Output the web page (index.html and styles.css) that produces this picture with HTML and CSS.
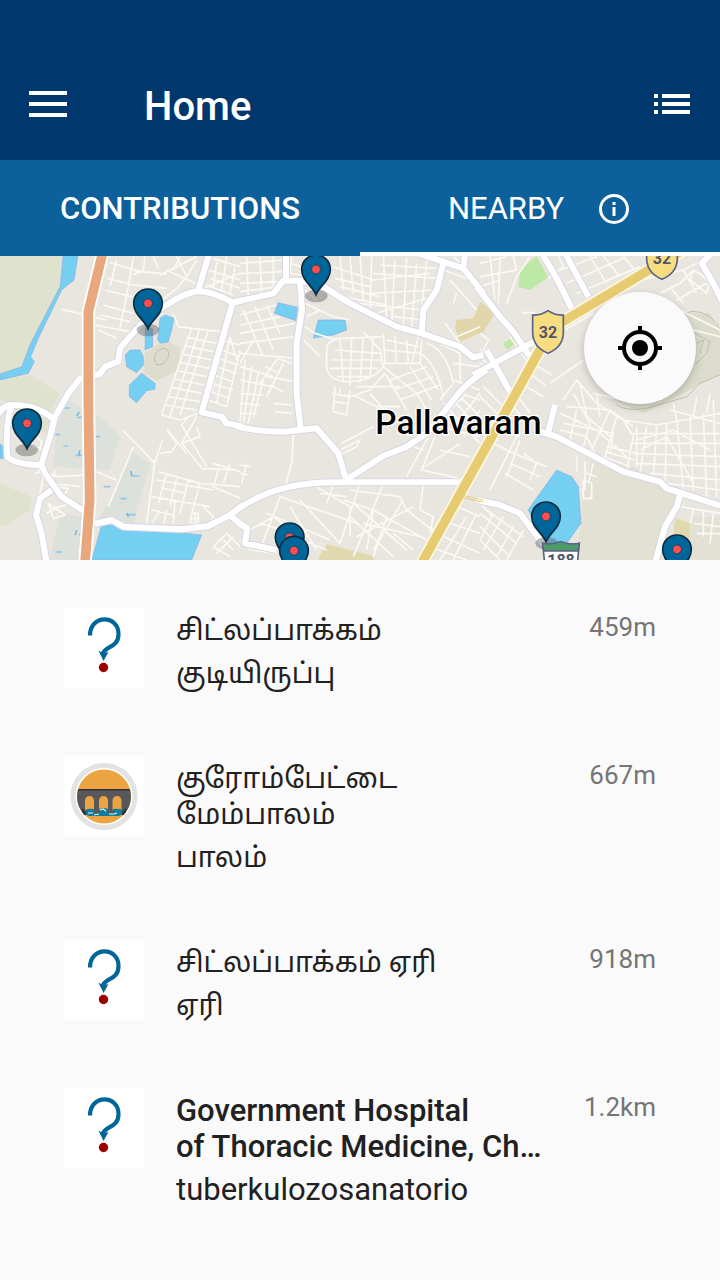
FILE: index.html
```html
<!DOCTYPE html>
<html lang="ta">
<head>
<meta charset="utf-8">
<meta name="viewport" content="width=device-width, initial-scale=1">
<title>Home</title>
<link rel="stylesheet" href="styles.css">
</head>
<body>
<header class="app-bar">
  <button class="icon-button" type="button" aria-label="Menu">
    <svg width="38" height="26" viewBox="0 0 38 26"><path d="M0 0h38v4H0zM0 11h38v4H0zM0 22h38v4H0z" fill="#fff"/></svg>
  </button>
  <h1 class="title">Home</h1>
  <button class="icon-button" type="button" aria-label="List">
    <svg width="36" height="20" viewBox="0 0 36 20"><path d="M0 0h4v4H0zM8 0h28v4H8zM0 8h4v4H0zM8 8h28v4H8zM0 16h4v4H0zM8 16h28v4H8z" fill="#fff"/></svg>
  </button>
</header>
<nav class="tabs">
  <button class="tab tab-strong" type="button">CONTRIBUTIONS</button>
  <button class="tab tab-active" type="button">NEARBY
    <svg width="30" height="30" viewBox="0 0 30 30"><circle cx="15" cy="15" r="13.5" fill="none" stroke="#fff" stroke-width="3"/><path d="M13.5 13h3v9h-3zM13.5 8h3v3h-3z" fill="#fff"/></svg>
  </button>
</nav>
<main>
<section class="map" aria-label="Map">
  <svg class="map-canvas" viewBox="0 18 2160 912" preserveAspectRatio="xMidYMid slice">
    <defs>
      <g id="pin">
        <path d="M0 76C-10 50-43 34-43 0A43 43 0 0 1 43 0C43 34 10 50 0 76z" fill="#006699" stroke="#0a2c40" stroke-width="5"/>
        <circle r="13" fill="#ff4f52" stroke="#123047" stroke-width="2"/>
      </g>
      <ellipse id="shade" rx="34" ry="19" fill="#555" opacity=".4"/>
      <g id="roads-left">
        <path d="M628 10L594 123M450 195L500 165Q550 130 594 123Q640 125 698 158L730 150M450 195L385 265L360 295L355 335L315 350L300 372L240 385L205 430L165 500L150 560L125 640M698 158L605 487L665 500L680 520L730 530M-10 500Q10 462 40 465Q110 465 163 508M35 468Q15 520 22 620Q40 642 125 646L135 670L185 740L255 785M155 720L120 745L108 795L125 850L140 940M285 822L335 810L370 830L545 838L625 828L690 795L730 765M690 795L730 830"/>
      </g>
      <g id="roads-mid">
        <path d="M-10 155L100 130L130 92L180 92L186 180L170 280L170 430L182 535M138 10L138 90M-10 530Q60 545 130 545L230 535L295 610L317 685M180 92L250 110L330 160L470 230L545 250L660 290L700 322L730 315M540 12L670 55L730 130M675 10L670 55M610 40L590 120L550 180L545 250M-10 780Q60 730 150 710Q220 695 317 697L660 697M317 690L430 618L500 590L560 550L640 450Q675 400 740 360M-10 815L22 835L15 880L110 900"/>
      </g>
      <g id="roads-right">
        <path d="M-10 110L60 200L100 245L160 335M180 0L230 85L275 175M250 0L325 140M-20 375L60 330L200 255M20 300L90 425M200 555L205 545L225 465M180 545L230 560L430 665L540 695L560 715L730 770M-10 750L60 765L120 790L150 830L190 885M600 735L590 770L555 830L525 940M690 15L665 40L700 100L725 150"/>
      </g>
    </defs>
    <rect y="0" width="2160" height="940" fill="#e9e6e0"/>

    <!-- land cover -->
    <path d="M0 0H190L175 120L100 270L60 350L0 380zM0 390L90 375L180 430L150 490L0 450zM0 700L95 740L90 780L10 830L0 825zM45 470L150 510L140 545L90 545L60 530z" fill="#dfe2cd"/>
    <path d="M490 270L540 290L535 360L470 392L430 370L435 310z" fill="#dedccd"/>
    <path d="M200 450L300 500L360 560L330 660L160 650L170 530zM390 600L450 640L400 820L290 810L340 740zM180 790L250 800L240 930H150z" fill="#dde1dc"/>
    <g transform="translate(1440)">
      <path d="M340 610Q520 660 600 740L530 930H290L310 730z" fill="#e3e1d3"/>
      <path d="M600 190L690 190L720 250V370L610 430L490 490L400 450z" fill="#dbdccb"/>
      <path d="M585 805L632 820L625 900L580 860z" fill="#e0d9ae"/>
      <path d="M640 800H720V930H620z" fill="#e2e1d3"/>
      <path d="M120 60L170 18L205 82L150 120L115 110zM68 280L100 262L108 280L82 300z" fill="#bde8a6"/>
      <path d="M0 155L45 190L10 245L-60 275L-75 235L-70 210L-20 205z" fill="#e0d6a9"/>
    </g>
    <path d="M960 915L980 882L1120 918V940H950z" fill="#e0d9ae"/>

    <!-- water -->
    <g fill="#75cff0" stroke="#8daee2" stroke-width="2">
      <path d="M190 10H235L222 90L185 120L115 265L92 320L103 335L85 370L0 390V372L65 350L92 280L180 110z"/>
      <path d="M480 205L495 195L522 205L515 240L505 275L482 280L473 270zM436 235L457 235L458 290L435 300zM376 315L390 300L420 300L430 320V345L410 368L380 350zM388 405L425 370L465 400L465 418L440 422L410 458L388 440z"/>
      <path d="M305 825H340L360 835L540 848L605 855L575 930H275zM0 582L12 590V625H0z"/>
      <path d="M834 158L892 172L888 212L823 190zM955 210L1035 210L1040 240L1000 255L940 264z"/>
      <path d="M1670 660L1715 680L1735 710L1743 820L1700 880L1640 880L1584 780z"/>
    </g>
    <path d="M192 474h18m22 28h14m-80 52h14m10 34h14m45 28h-22m60-56h14m92 118h26m-108 32h20m30 36h20m-2 48h28m-170 60h20m-90 52h20" stroke="#91c7e5" stroke-width="5" fill="none"/>
    <path d="M236 615l4-14m-10-104l8-10m158 190l-4-14m-166 192l4-14m155-40l-4-12" stroke="#75b9e5" stroke-width="5"/>

    <!-- contour lines -->
    <g fill="none" stroke="#bfc1aa" stroke-width="3">
      <path d="M463 330Q462 305 488 295Q512 298 505 320Q490 348 470 344z"/>
      <path d="M2050 190Q2110 170 2150 220L2170 260M2085 250L2130 275L2120 310L2085 345M1850 465Q1880 485 1940 475L2060 440L2100 400L2170 370M2090 280L2110 270L2100 310"/>
    </g>

    <!-- side streets -->
    <g class="streets">
      <path d="M330 38L420 65L500 72M322 85L400 105L500 115M315 120L395 140M400 20L385 110L360 235M435 20L430 60L400 75M460 20L475 55M530 20L560 80L530 115L480 155M500 60L585 100M185 178L320 210M310 165L400 190M300 195L390 215M285 225L390 245M295 240L350 265M480 75L590 20M350 30L330 110M560 80L590 30M540 20L520 60"/>
      <path d="M625 60L720 90M630 85L720 115M618 105L700 135M640 25L720 50M650 35L640 110M680 20L665 120M705 50L690 130M610 115L720 70"/>
      <path d="M520 190L535 230L660 245M575 235L485 495M600 235L510 500M625 240L540 495M560 262L650 280M552 287L640 305M545 312L635 330M537 337L630 355M530 362L620 380M522 387L615 405M515 412L605 430M505 440L600 455M495 465L590 480M485 495L540 510L595 490M590 500L545 580L610 660M565 500L545 525L620 650M500 538L560 610M545 580L600 560L590 530M500 540L530 580L515 605L480 610"/>
      <path d="M660 270L720 285M650 295L720 320M640 320L715 345M632 345L710 370M625 370L700 395M620 395L700 420M615 420L690 445M610 445L680 470M690 260L650 460M720 300L680 470M675 255L635 430M690 260L710 330"/>
      <path d="M368 540L465 640M400 590L325 770M465 630L440 820M488 570L465 635M290 665L350 690M165 660L155 700L240 710M130 670L180 680L260 675M160 710L205 715L185 750M145 760L195 795L160 805zM155 775L200 765M140 790L180 770M110 650L130 680L108 790M110 560L125 575L120 600M95 590L125 595M105 670L140 660"/>
      <path d="M475 665L600 700L720 710M470 690L640 720M455 740L630 770M500 670L475 760M530 685L510 770M565 690L540 790M600 700L575 790M490 715L560 730M480 780L455 820M455 780L520 795M500 780L490 830M525 750L520 820M575 790h20v30h-25zM570 805h28M585 788v30M610 655L700 660M640 640L720 665M655 660L640 710L720 745M690 640L670 700M610 770L640 800L630 825"/>
      <path d="M640 890L680 850L720 890M650 910L700 860M670 870L700 900M640 890L690 920"/>
    </g>
    <g class="streets" transform="translate(720)">
      <path d="M0 40L135 30M0 70L130 65M0 100L120 95M0 125L100 112M20 20L25 135M60 20L65 130M100 20L100 115M150 40L185 50M155 20L150 70L185 75M0 195L110 165M0 225L120 200M0 250L165 220M0 280L165 260M10 180L70 320M45 170L100 300M80 165L120 250M0 310L170 325M40 270L0 340M0 350L100 380M110 330L60 400M130 340L80 440M0 390L95 410M15 330L0 520M35 350L10 520M55 370L25 520M70 390L40 500M0 430L70 435M0 460L60 465M0 490L50 490M80 380L165 395M90 405L130 425M100 460L155 465M105 485L155 490M75 350L120 370M155 340L110 325"/>
      <path d="M195 120L230 150M195 160L280 200L330 210M200 200L240 180M195 230L225 250L290 270M190 270L240 320M280 50L400 90L570 70M300 20L310 120M330 20L340 130M360 20L370 150M395 20L390 185M430 20L440 210M465 35L455 220M500 25L490 230M530 40L515 235M560 30L540 230M285 85L390 110M300 110L420 140M310 140L440 165M350 160L550 180M390 195L560 145M400 70L590 85M420 45L590 55M390 130L580 120M460 200L550 210"/>
      <path d="M260 290Q270 265 310 265L430 260M260 290L260 355Q270 395 330 395Q400 390 430 350L420 300L370 245M285 300L425 310M275 330L425 330M270 355L415 355M290 380L390 380M300 265L310 395M335 260L330 405M370 260L360 400M400 260L390 385M430 250L435 340L540 340L545 270M440 270L535 290M435 300L540 310M465 260L470 340M500 270L505 340M535 260L515 340M275 430L330 440L390 420L435 370L500 480M285 410L280 485L320 495L330 420M280 455L320 460M300 415L300 430M350 410L480 410M340 435L410 470L480 470M390 430L450 500M430 350L530 430L560 480M450 390L560 350M460 420L580 380M480 450L600 405M560 280Q620 300 640 400L600 450M540 310Q590 340 610 440M580 270L660 310L660 400M540 340L595 420M510 350L575 450"/>
      <path d="M610 60L720 100M630 90L710 180M650 130L640 160M615 220L660 280M650 260L720 230M680 60L640 20M640 340L720 350M640 390L720 420M660 430L720 450M610 460L720 580M630 440L720 540M650 430L720 500M610 500L680 430M640 530L720 430M670 560L720 480M300 600L360 570L350 590L290 620M305 580L400 530M160 555L155 640L135 710M0 645L30 650M0 670L25 675M20 640L5 700M585 560L545 660L680 690M565 560L500 680M600 600L690 620M555 650L660 580M520 590L550 600M600 530L720 560"/>
      <path d="M120 740L350 820M120 740L60 900M150 770L230 900M180 750L300 880M80 790L270 870M60 820L200 860M110 840L260 900M30 840L100 800L140 830M220 705L330 770L330 860M240 730L320 740M280 705L260 760M330 720L480 740L500 780L590 850M310 750L400 780L560 870M360 700L300 880M430 700L340 920M400 780L380 900M440 800L400 920M340 760L500 900M330 800L460 920M350 860L520 770M370 820L540 860M400 900L490 750M460 850L520 900M550 700L540 780L580 800L570 850M630 760L720 800M600 810L720 850M590 850L720 910M640 740L580 900M680 800L600 930M710 790L640 930M570 890L680 930M0 870L30 900L110 910"/>
    </g>
    <g class="streets" transform="translate(1440)">
      <path d="M0 40L80 20M0 80L110 60L100 18M30 20L45 150M60 20L55 160M0 110L60 90M80 160L110 80L150 20M205 85L250 50L235 18M125 188H165M240 60L350 20M260 100L430 25M290 130L480 50M330 20L380 100M370 18L420 80M430 20L465 60M270 190L400 110L610 60L690 20M255 240L340 190M245 210L330 165M540 130L600 100L640 60M590 150L680 100M570 110L610 160M640 60L690 90L680 130L630 90zM660 70L690 100M610 60L650 130M600 180L720 240M640 240L720 260"/>
      <path d="M0 320L30 350L10 370M0 300L50 330M0 340L20 350M0 250L25 270L10 300M90 260L140 330M150 370L200 410M160 340L215 375M140 410L190 440M115 440L150 490M100 470L140 520M50 540L120 560M40 580L100 610M0 440L60 500M10 410L80 480M30 720L120 540M90 640L180 680M75 670L160 720M130 610L170 640L150 690M100 610L200 650M120 570L80 680M290 620V665M310 690L335 700V745H310zM340 640L325 700M350 680L310 665M315 635L315 720"/>
      <path d="M250 450L290 390L350 460L430 510L530 525L720 490M260 470L390 480L460 530M240 490L350 540L440 620M280 430L330 520L310 590M300 400L320 500L390 560M350 430L360 500M340 430L430 450M250 520L400 550L390 610M240 540L320 560L350 620M290 480L270 570M390 480L330 610M410 500L370 640M430 510L460 560L440 660M380 590L470 610M375 605L465 630M370 620L450 650M470 530V650M500 530L480 670M530 525L520 690M560 520L555 710M590 510L610 720M630 500L640 720M670 490L680 740M700 450L710 740M450 550L720 551M450 580L720 580M460 610L720 620M470 640L720 650M510 670L720 690M560 700L720 720M570 480L720 520M580 460L590 510M650 440L640 500M690 430L680 490M470 570L580 540L690 600M480 600L560 560L640 700"/>
      <path d="M0 790L110 880M20 780L130 860M0 830L90 920M40 790L0 870M70 800L10 900M100 830L50 920M130 840L80 930M0 870L60 930M0 760L40 800M600 770L720 790M640 780L630 820M670 785V860M700 790L690 880M640 820L720 830M650 850L720 851M210 400L310 330" />
    </g>

    <!-- main roads: outline, then fill -->
    <g class="road-edge"><use href="#roads-left"/><use href="#roads-mid" x="720"/><use href="#roads-right" x="1440"/></g>
    <g class="road-fill"><use href="#roads-left"/><use href="#roads-mid" x="720"/><use href="#roads-right" x="1440"/></g>

    <path class="trunk-edge" d="M310 0L265 185V450L269 750L255 940"/>
    <path class="trunk" d="M310 0L265 185V450L269 750L255 940"/>
    <path class="highway-edge" d="M1265 940L1625 290L1680 220L1980 40L2050 0"/>
    <path class="highway" d="M1265 940L1625 290Q1640 245 1680 220L1980 40L2050 0"/>
    <path d="M1385 742L1450 757M1388 736L1452 751" stroke="#e6cf76" stroke-width="3"/>

    <text class="place" x="1126" y="552">Pallavaram</text>

    <!-- route shields -->
    <g id="shield">
      <path d="M1598 195Q1622 197 1644 182Q1666 197 1690 195V250Q1688 292 1644 310Q1600 292 1598 250z" fill="#f6dd80" stroke="#5c6286" stroke-width="5"/>
      <text class="route" x="1644" y="263">32</text>
    </g>
    <use href="#shield" x="342" y="-222"/>

    <use href="#shade" x="444" y="240"/><use href="#pin" x="444" y="160"/>
    <use href="#shade" x="80" y="600"/><use href="#pin" x="81" y="520"/>
    <use href="#shade" x="949" y="138"/><use href="#pin" x="948" y="58"/>
    <use href="#pin" x="869" y="862"/><use href="#pin" x="882" y="902"/>
    <use href="#shade" x="1640" y="880"/><use href="#pin" x="1638" y="799"/>
    <use href="#pin" x="2031" y="898"/>

    <path d="M1628 880Q1655 886 1682 875Q1710 886 1738 880L1732 940H1634z" fill="#fff" stroke="#5c6286" stroke-width="5"/>
    <path d="M1628 880Q1655 886 1682 875Q1710 886 1738 880L1734 903H1632z" fill="#4f9a6b" stroke="#5c6286" stroke-width="4"/>
    <text class="route" x="1683" y="948">188</text>
  </svg>
  <button class="locate" type="button" aria-label="My location">
    <svg width="44" height="44" viewBox="0 0 44 44"><circle cx="22" cy="22" r="8"/><circle cx="22" cy="22" r="16" fill="none" stroke="#000" stroke-width="4"/><path d="M20 0h4v6h-4zM20 38h4v6h-4zM0 20h6v4H0zM38 20h6v4h-6z"/></svg>
  </button>
</section>

<ul class="places">
  <li class="item">
    <svg class="thumb" viewBox="0 0 80 80">
      <g id="question"><path d="M26 27.500C26 6 54.500 6.500 54.500 26C54.500 41 40 37 38.500 47" fill="none" stroke="#069" stroke-width="4.200"/><path d="M34.500 42.500Q39 46 44.500 44L39.500 53z" fill="#069"/><circle cx="39.500" cy="59.500" r="4.700" fill="#900"/></g>
    </svg>
    <div class="text"><h2 class="name">சிட்லப்பாக்கம்</h2><p class="kind">குடியிருப்பு</p></div>
    <span class="distance">459m</span>
  </li>
  <li class="item">
    <svg class="thumb" viewBox="0 0 80 80">
      <clipPath id="disc"><circle cx="40" cy="40.500" r="27"/></clipPath>
      <circle cx="40" cy="40.500" r="31" fill="#fff" stroke="#e3e3e3" stroke-width="5"/>
      <g clip-path="url(#disc)">
        <path d="M10 10h60v60H10z" fill="#eba441"/>
        <path d="M10 33h60v22l-8 4H18l-8-4z" fill="#58585a"/><path d="M10 33h60v1.500H10z" fill="#333"/>
        <path d="M21 54V44.500a4.500 4.500 0 0 1 9 0V54zM35 54V44.500a4.500 4.500 0 0 1 9 0V54zM48.500 54V44.500a4.500 4.500 0 0 1 9 0V54z" fill="#eba441"/>
        <path d="M21 54q4-2 9-1v4h5v-4q5-2 9 0v4h5v-4q6-1 10 1v4l-4 2H25l-4-2z" fill="#0f7d9e"/>
        <path d="M24 57h5M36 54l3-1 3 2M45 58h5l3-1M30 59l5-1" stroke="#e2f4f8" stroke-width="1.200" fill="none"/>
        <path d="M18 52l4 4v3h-4zM62 52l-4 4v3h4z" fill="#333"/>
      </g>
    </svg>
    <div class="text"><h2 class="name">குரோம்பேட்டை<br>மேம்பாலம்</h2><p class="kind">பாலம்</p></div>
    <span class="distance">667m</span>
  </li>
  <li class="item">
    <svg class="thumb" viewBox="0 0 80 80"><use href="#question"/></svg>
    <div class="text"><h2 class="name">சிட்லப்பாக்கம் ஏரி</h2><p class="kind">ஏரி</p></div>
    <span class="distance">918m</span>
  </li>
  <li class="item">
    <svg class="thumb" viewBox="0 0 80 80"><use href="#question"/></svg>
    <div class="text"><h2 class="name name-latin">Government Hospital<br>of Thoracic Medicine, Ch…</h2><p class="kind kind-latin">tuberkulozosanatorio</p></div>
    <span class="distance">1.2km</span>
  </li>
</ul>
</main>
</body>
</html>
```
FILE: styles.css
```css
* { box-sizing: border-box; }
body {
  margin: 0;
  min-height: 100vh;
  background: #fafafa;
  color: #212121;
  font-family: Roboto, "Noto Sans", "Noto Sans Tamil", sans-serif;
}
button { border: 0; padding: 0; background: none; color: inherit; font: inherit; }
svg { display: block; }

.app-bar {
  display: flex;
  align-items: center;
  padding: 48px 30px 0 29px;
  height: 160px;
  background: #00376c;
  color: #fff;
}
.icon-button { display: flex; }
.title {
  flex: 1;
  margin: 0 0 0 77px;
  padding-top: 6px;
  font-size: 40px;
  line-height: 48px;
  font-weight: 500;
}

.tabs { display: grid; grid-template-columns: 1fr 1fr; background: #0c609c; color: #fff; }
.tab {
  display: flex;
  align-items: center;
  justify-content: center;
  gap: 35px;
  height: 96px;
  padding-top: 5px;
  border-bottom: 4px solid transparent;
  font-size: 31px;
}
.tab-strong { font-weight: 500; }
.tab-active { padding-right: 3px; border-bottom-color: #fff; }

.map { position: relative; height: 304px; overflow: hidden; }
.map-canvas { width: 100%; height: 100%; }
.streets, .road-edge, .road-fill, .trunk, .trunk-edge, .highway, .highway-edge { fill: none; stroke-linejoin: round; }
.streets { stroke: #fbf9f5; stroke-width: 5px; }
.road-edge { stroke: #d6d6e6; stroke-width: 24px; }
.road-fill { stroke: #fff; stroke-width: 18px; }
.trunk-edge { stroke: #fff; stroke-width: 40px; }
.trunk { stroke: #e8a77c; stroke-width: 29px; }
.highway-edge { stroke: #fdf8e2; stroke-width: 38px; }
.highway { stroke: #e6cb70; stroke-width: 28px; }
.place {
  font-family: Roboto, sans-serif;
  font-size: 100px;
  font-weight: 500;
  fill: #000;
  stroke: #fff;
  stroke-width: 8px;
  paint-order: stroke;
}
.route { font-family: Roboto, sans-serif; font-size: 48px; font-weight: 700; fill: #54556b; text-anchor: middle; }
.locate {
  position: absolute;
  top: 36px;
  right: 24px;
  display: grid;
  place-items: center;
  width: 112px;
  height: 112px;
  border-radius: 50%;
  background: #fafafa;
  box-shadow: 0 3px 8px rgba(0, 0, 0, .2);
}

.places { margin: 0; padding: 16px 0; list-style: none; }
.item { display: flex; align-items: flex-start; gap: 32px; padding: 32px 64px; }
.thumb { flex: none; width: 80px; height: 80px; background: #fff; }
.text { flex: 1; min-width: 0; padding-top: 5px; }
.name, .kind { margin: 0; font-size: 28px; line-height: 36px; font-weight: 400; }
.name-latin { font-size: 31px; font-weight: 500; white-space: nowrap; }
.kind { margin-top: 7px; }
.kind-latin { font-size: 31px; }
.distance { padding-top: 3px; font-size: 26px; line-height: 32px; color: #757575; }
```
